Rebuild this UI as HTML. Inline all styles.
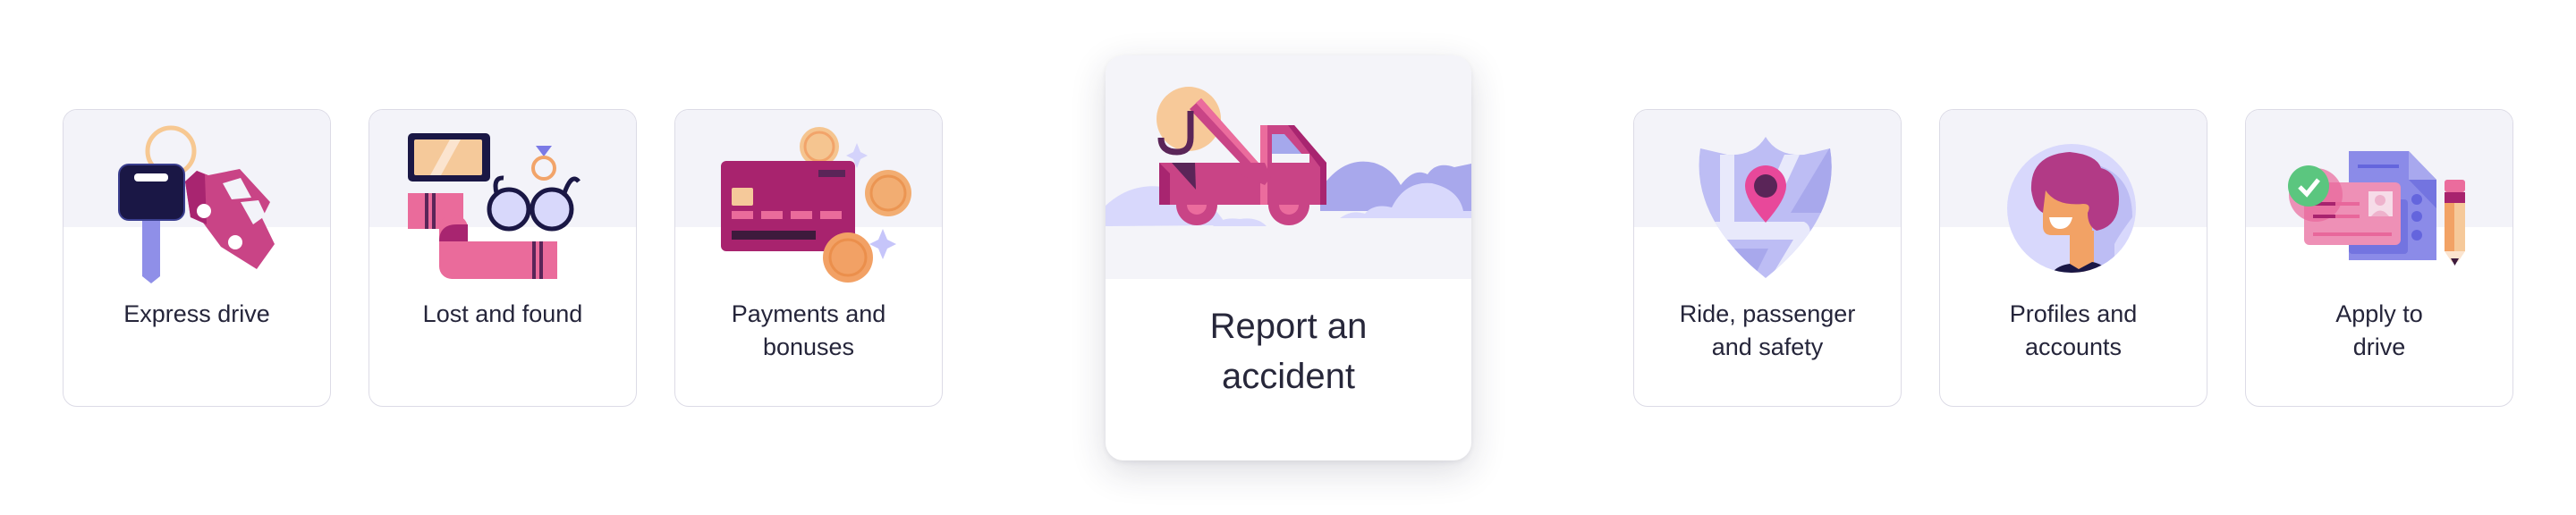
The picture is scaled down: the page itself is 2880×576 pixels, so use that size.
<!DOCTYPE html>
<html><head><meta charset="utf-8"><style>
html,body{margin:0;padding:0;background:#fff;width:2880px;height:576px;overflow:hidden;position:relative;font-family:"Liberation Sans",sans-serif}
.c{position:absolute;top:122px;width:300px;height:333px;border:1.5px solid #dcdbe6;border-radius:16px;box-sizing:border-box;background:#fff;overflow:hidden}
.c .bg{position:absolute;left:0;top:0;right:0;height:131px;background:#f3f3f9}
.c svg{position:absolute;left:0;top:0}
.c .t{position:absolute;left:0;right:0;top:210px;text-align:center;font-size:27px;line-height:37px;color:#25253a}
.big{position:absolute;left:1236px;top:62px;width:409px;height:453px;border-radius:20px;background:#fff;overflow:hidden;box-shadow:0 12px 40px rgba(40,40,70,.16),0 2px 6px rgba(40,40,70,.08)}
.big .bg{position:absolute;left:0;top:0;right:0;height:250px;background:#f4f4f9}
.big svg{position:absolute;left:0;top:0}
.big .t{position:absolute;left:0;right:0;top:275px;text-align:center;font-size:40px;line-height:56px;color:#27273a}
</style></head><body>

<div class="c" style="left:70px"><div class="bg"></div>
<svg width="300" height="200" viewBox="0 0 300 200">
<circle cx="120" cy="46" r="26" fill="none" stroke="#f7c892" stroke-width="5"/>
<rect x="88" y="118" width="20" height="58" fill="#8f8fe8"/>
<polygon points="88,176 108,176 108,186 98,194 88,186" fill="#8f8fe8"/>
<rect x="62" y="61" width="73" height="62" rx="11" fill="#1a1745" stroke="#3b3f8f" stroke-width="2"/>
<rect x="79" y="71" width="38" height="9" rx="4" fill="#fff"/>
<polygon points="136,80 149,68 162,73 197,66 231,103 222,121 236,150 216,178 176,153 156,126 142,120" fill="#c94486"/>
<polygon points="136,80 149,68 158,72 160,128 142,120" fill="#a82570"/>
<polygon points="178,82 198,76 210,98 188,100" fill="#f3f3f9"/>
<polygon points="198,103 218,101 226,118 212,128" fill="#f3f3f9"/>
<circle cx="157" cy="113" r="8" fill="#fff"/><circle cx="192" cy="148" r="8" fill="#fff"/>
</svg>
<div class="t">Express drive</div></div>

<div class="c" style="left:412px"><div class="bg"></div>
<svg width="300" height="200" viewBox="0 0 300 200">
<rect x="43" y="26" width="92" height="54" rx="5" fill="#1a1745"/>
<rect x="50" y="33" width="76" height="40" rx="2" fill="#f5c99a"/>
<polygon points="68,73 90,33 102,33 80,73" fill="#fbe4cf"/>
<polygon points="186,40 204,40 195,52" fill="#7b7ae6"/>
<circle cx="195" cy="65" r="12" fill="none" stroke="#f2a46a" stroke-width="4"/>
<rect x="43" y="93" width="62" height="40" fill="#ea6b9b"/>
<rect x="62" y="93" width="4" height="40" fill="#5a2558"/><rect x="70" y="93" width="4" height="40" fill="#5a2558"/>
<rect x="78" y="118" width="32" height="71" rx="14" fill="#ea6b9b"/>
<rect x="92" y="147" width="118" height="42" fill="#ea6b9b"/>
<path d="M78 147 Q78 128 98 128 L110 128 L110 147 Z" fill="#a82570"/>
<rect x="182" y="147" width="4" height="42" fill="#5a2558"/><rect x="190" y="147" width="4" height="42" fill="#5a2558"/>
<circle cx="156" cy="111" r="22" fill="#d8d8fb" stroke="#1a1745" stroke-width="5"/>
<circle cx="204" cy="111" r="22" fill="#d8d8fb" stroke="#1a1745" stroke-width="5"/>
<path d="M142 93 Q138 75 150 76 M218 93 Q226 70 234 80" fill="none" stroke="#1a1745" stroke-width="5"/>
</svg>
<div class="t">Lost and found</div></div>

<div class="c" style="left:754px"><div class="bg"></div>
<svg width="300" height="200" viewBox="0 0 300 200">
<circle cx="161" cy="41" r="22" fill="#f5c590"/><circle cx="161" cy="41" r="16" fill="none" stroke="#f2a46a" stroke-width="3"/>
<path d="M203 37 l4 10 l8 4 l-8 4 l-4 10 l-4 -10 l-8 -4 l8 -4z" fill="#d4d3fb"/>
<rect x="51" y="57" width="150" height="101" rx="6" fill="#a8236e"/>
<rect x="160" y="67" width="30" height="8" fill="#5a2558"/>
<rect x="63" y="87" width="24" height="20" rx="2" fill="#f5c99a"/>
<rect x="63" y="113" width="24" height="9" fill="#ea6b9b"/><rect x="96" y="113" width="24" height="9" fill="#ea6b9b"/><rect x="129" y="113" width="24" height="9" fill="#ea6b9b"/><rect x="162" y="113" width="24" height="9" fill="#ea6b9b"/>
<rect x="63" y="135" width="94" height="10" fill="#3d1a3c"/>
<circle cx="238" cy="93" r="26" fill="#f2ad72"/><circle cx="238" cy="93" r="19" fill="none" stroke="#eb9552" stroke-width="3"/>
<path d="M232 133 l5 12 l10 5 l-10 5 l-5 12 l-5 -12 l-10 -5 l10 -5z" fill="#c6c5fa"/>
<circle cx="193" cy="165" r="28" fill="#f2a165"/><circle cx="193" cy="165" r="20" fill="none" stroke="#eb8f4c" stroke-width="3"/>
</svg>
<div class="t">Payments and<br>bonuses</div></div>

<div class="big"><div class="bg"></div>
<svg width="409" height="250" viewBox="0 0 409 250">
<path d="M240 174 L240 150 Q265 112 300 120 Q320 126 330 145 Q345 125 360 133 Q370 118 390 125 L409 121 L409 174 Z" fill="#a8a8ec"/>
<path d="M0 191 L0 168 Q30 140 70 148 Q100 152 115 165 Q130 180 135 190 Z" fill="#d8d8fc"/>
<path d="M120 191 Q130 180 150 183 Q170 180 180 191 Z" fill="#d8d8fc"/>
<path d="M262 182 Q275 172 290 177 Q300 165 320 170 Q335 140 365 143 Q395 150 400 174 L409 174 L409 182 Z" fill="#d8d8fc"/>
<circle cx="93" cy="71" r="36" fill="#f7c999"/>
<polygon points="94,60 107,48 185,136 172,143" fill="#c94486"/>
<polygon points="101,53 107,48 185,136 180,139" fill="#eb6c9d"/>
<path d="M95 62 L95 92 Q95 108 80 108 Q62 108 62 92" fill="none" stroke="#5a2558" stroke-width="7"/>
<polygon points="173,78 211,78 247,120 247,167 173,167" fill="#c94486"/>
<polygon points="173,78 181,78 181,167 173,167" fill="#eb6c9d"/>
<polygon points="204,78 211,78 247,120 247,167 240,167 240,125" fill="#a82570"/>
<polygon points="186,88 200,88 228,120 186,120" fill="#a5a8ec"/>
<rect x="186" y="110" width="42" height="10" fill="#f4f4f9"/>
<polygon points="60,120 173,120 173,167 60,167" fill="#c94486"/>
<polygon points="120,120 178,120 185,136 178,145" fill="#c94486"/>
<polygon points="60,120 72,132 72,167 60,167" fill="#a82570"/>
<polygon points="74,120 100,120 101,150" fill="#5a2558"/>
<path d="M79 167 A23 23 0 0 0 125 167 Z" fill="#c94486"/><path d="M91 167 A11 11 0 0 0 113 167 Z" fill="#eb6c9d"/>
<path d="M182 167 A23 23 0 0 0 228 167 Z" fill="#c94486"/><path d="M194 167 A11 11 0 0 0 216 167 Z" fill="#eb6c9d"/>
</svg>
<div class="t">Report an<br>accident</div></div>

<div class="c" style="left:1826px"><div class="bg"></div>
<svg width="300" height="200" viewBox="0 0 300 200">
<defs><clipPath id="sh"><path d="M147 30 Q160 52 190 50 L219 43 Q232 120 147 188 Q62 120 74 43 L104 50 Q134 52 147 30 Z"/></clipPath></defs>
<g clip-path="url(#sh)">
<rect x="60" y="25" width="180" height="170" fill="#bdbdf4"/>
<polygon points="175,115 220,40 240,40 240,115" fill="#a8a8ec"/>
<polygon points="80,155 150,155 130,195 80,195" fill="#a8a8ec"/>
<rect x="96" y="50" width="16" height="80" fill="#e8e9fb"/>
<polygon points="168,50 185,50 155,115 140,115" fill="#e8e9fb"/>
<path d="M70 125 L190 125 Q200 130 195 145 L165 195 L148 195 L178 145 L70 145 Z" fill="#e8e9fb"/>
</g>
<path d="M147 126 Q124 100 124 85 A23 23 0 0 1 170 85 Q170 100 147 126 Z" fill="#e8489a"/>
<circle cx="147" cy="85" r="13" fill="#5a2558"/>
</svg>
<div class="t">Ride, passenger<br>and safety</div></div>

<div class="c" style="left:2168px"><div class="bg"></div>
<svg width="300" height="200" viewBox="0 0 300 200">
<defs><clipPath id="cc"><circle cx="147" cy="110" r="72"/></clipPath></defs>
<circle cx="147" cy="110" r="72" fill="#d8d8fc"/>
<g clip-path="url(#cc)">
<path d="M170 60 Q215 70 215 120 Q200 140 195 150 L195 200 L160 200 Z" fill="#bdbdf4"/>
<rect x="145" y="135" width="27" height="50" fill="#f2a265"/>
<path d="M115 85 L170 85 L170 140 L125 140 Q115 140 115 130 Z" fill="#f2a265"/>
<path d="M122 190 Q125 175 145 172 L155 178 L170 170 Q185 172 195 190 Z" fill="#1a1745"/>
<path d="M102 90 Q100 50 145 47 Q175 50 180 65 Q200 70 200 100 Q200 130 175 135 Q165 130 165 115 Q170 105 160 105 Q130 108 118 90 L115 115 Q105 110 102 90 Z" fill="#b23a86"/>
<path d="M122 120 L148 120 Q145 133 134 133 Q124 133 122 120 Z" fill="#fff"/>
</g>
</svg>
<div class="t">Profiles and<br>accounts</div></div>

<div class="c" style="left:2510px"><div class="bg"></div>
<svg width="300" height="200" viewBox="0 0 300 200">
<polygon points="115,46 182,46 213,78 213,168 115,168" fill="#8b8be8"/>
<polygon points="182,46 213,78 182,78" fill="#a8a8ee"/>
<polygon points="182,78 213,78 213,110" fill="#7374e0"/>
<rect x="125" y="61" width="46" height="4" fill="#6465dd"/>
<circle cx="191" cy="100" r="6" fill="#6465dd"/><circle cx="191" cy="119" r="6" fill="#6465dd"/><circle cx="191" cy="140" r="6" fill="#6465dd"/>
<rect x="115" y="100" width="66" height="61" rx="4" fill="#7374e0"/>
<rect x="65" y="81" width="108" height="70" rx="6" fill="#ee90b6"/>
<circle cx="78" cy="95" r="30" fill="#e8679b" opacity=".7"/>
<rect x="137" y="91" width="27" height="28" fill="#f6dce8"/>
<circle cx="150" cy="101" r="6" fill="#eeb2cc"/><path d="M140 119 Q150 106 160 119Z" fill="#eeb2cc"/>
<rect x="75" y="103" width="52" height="4" fill="#e8679b"/>
<rect x="75" y="117" width="52" height="4" fill="#e8679b"/>
<rect x="75" y="103" width="25" height="4" fill="#a8236e"/><rect x="75" y="117" width="25" height="4" fill="#a8236e"/>
<rect x="75" y="137" width="88" height="4" fill="#e8679b"/>
<circle cx="70" cy="85" r="23" fill="#5bc67f"/>
<path d="M60 86 L68 94 L81 78" fill="none" stroke="#fff" stroke-width="5"/>
<rect x="222" y="78" width="23" height="14" rx="3" fill="#eb6c9d"/>
<rect x="222" y="92" width="23" height="12" fill="#a8236e"/>
<rect x="222" y="104" width="23" height="54" fill="#f6c99a"/>
<rect x="222" y="104" width="11" height="54" fill="#f2a265"/>
<polygon points="222,158 245,158 237,170 230,170" fill="#fbe4cf"/>
<polygon points="229,166 238,166 233.5,174" fill="#3d1a3c"/>
</svg>
<div class="t">Apply to<br>drive</div></div>

</body></html>
